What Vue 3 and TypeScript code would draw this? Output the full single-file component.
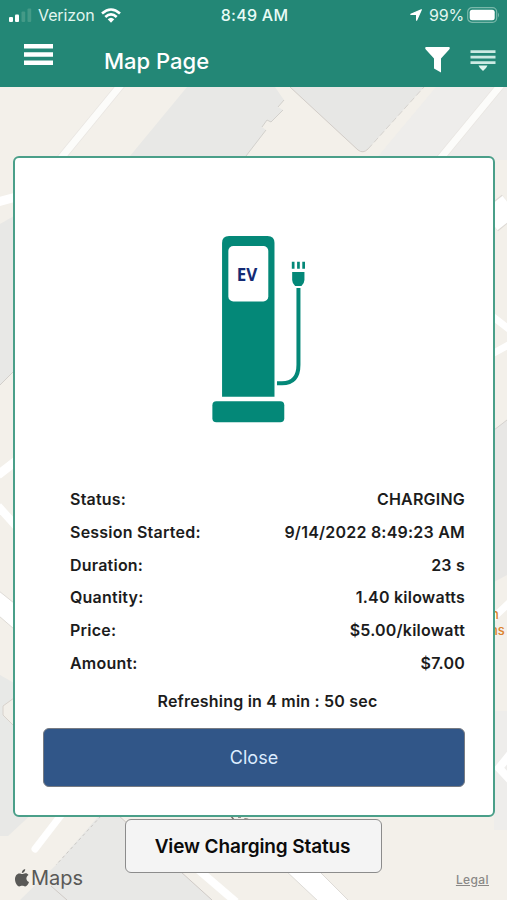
<script setup lang="ts">
interface Detail {
  label: string
  value: string
}

const details: Detail[] = [
  { label: 'Status:', value: 'CHARGING' },
  { label: 'Session Started:', value: '9/14/2022 8:49:23 AM' },
  { label: 'Duration:', value: '23 s' },
  { label: 'Quantity:', value: '1.40 kilowatts' },
  { label: 'Price:', value: '$5.00/kilowatt' },
  { label: 'Amount:', value: '$7.00' },
]
</script>

<template>
  <div class="screen">
    <svg class="map" viewBox="0 0 507 900" aria-hidden="true">
      <rect width="507" height="900" fill="#f3f0ea" />
      <!-- blocks along the top -->
      <path d="M187 87H275L284 100L278 107L283 110L271 122L267 120L262 127L266 130L246 156H130Z" fill="#e8e8e6" />
      <path d="M284 100L278 107M283 110L271 122L267 120L262 127M266 130L246 156" fill="none" stroke="#d2d0cc" />
      <path d="M290 87H424L368 149Q363 154 358 150Z" fill="#e7e7e5" />
      <path d="M290 87L358 150Q363 154 368 149" fill="none" stroke="#d2cdc8" />
      <path d="M368 149L424 87" fill="none" stroke="#d5d2ce" stroke-dasharray="6 3" />
      <path d="M436 87H507V160H375Z" fill="#eeedeb" />
      <path d="M125 80L57 163M505 80L435 165" fill="none" stroke="#e9e6e2" stroke-width="8.5" />
      <path d="M125 80L57 163M505 80L435 165" fill="none" stroke="#fcfcfa" stroke-width="7" />
      <!-- left edge -->
      <path d="M0 224L14 216V371L0 385Z" fill="#e8e8e6" />
      <path d="M0 385L14 371" stroke="#d2cfcb" />
      <path d="M-2 202L16 197M-2 475L16 461" stroke="#fff" stroke-width="9" />
      <path d="M-2 506L16 526" stroke="#fff" stroke-width="8" />
      <path d="M-1 591L14 603V629L-1 616Z" fill="#fff" stroke="#dedbd6" />
      <path d="M0 675L14 683V820L0 834Z" fill="#e8e9e7" />
      <path d="M14 698L3 706V715L14 726Z" fill="#f2efe9" stroke="#d8d2cc" />
      <!-- right edge -->
      <path d="M494 430L507 420V575L494 582Z" fill="#e8e7e5" />
      <path d="M494 430L507 420" stroke="#d4d1cd" />
      <path d="M490 221L510 205" stroke="#ddd9d4" stroke-width="26" />
      <path d="M490 221L510 205" stroke="#fff" stroke-width="24" />
      <path d="M492 316L510 330M492 354L510 344M492 619L510 602" stroke="#fff" stroke-width="7" />
      <path d="M494 711H507V830H494Z" fill="#eeedeb" />
      <path d="M512 752L499 768L512 782" fill="none" stroke="#fff" stroke-width="8" />
      <!-- blocks along the bottom -->
      <path d="M0 810H36L8 836H0Z" fill="#e8e8e6" />
      <path d="M65 810L35 849" stroke="#fff" stroke-width="7" stroke-linecap="round" />
      <path d="M104 810L55 866L20 900H66L52 887L66 900H212L112 810Z" fill="#e8e8e6" />
      <path d="M101 816L56 865" stroke="#cbc8c4" stroke-dasharray="3 3" />
      <path d="M118 815L212 900M51 886L67 900" stroke="#cfcac6" />
      <path d="M194 866L236 902" stroke="#fff" stroke-width="8" />
      <path d="M285 870H318L350 902H319Z" fill="#fff" stroke="#dedbd7" />
      <path d="M231 816L234 820M238 817H241M243 822Q244 817 249 820" fill="none" stroke="#77716b" stroke-width="1.5" />
      <text x="491" y="619" class="poi">n</text>
      <text x="490" y="635" class="poi">ns</text>
    </svg>

    <header class="header">
      <div class="status-bar">
        <div class="carrier">
          <svg width="23" height="14" viewBox="0 0 23 14">
            <rect x="0" y="9" width="4" height="5" rx="1" fill="#fff" />
            <rect x="6" y="6.5" width="4" height="7.5" rx="1" fill="#fff" />
            <rect x="12.5" y="3.5" width="3.7" height="10.5" rx="1" fill="#449a87" />
            <rect x="18.5" y="0.5" width="3.7" height="13.5" rx="1" fill="#449a87" />
          </svg>
          <span class="carrier-name">Verizon</span>
          <svg width="20" height="15" viewBox="0 0 20 15" fill="none" stroke="#fff" stroke-width="2.6">
            <path d="M1 5.5Q10-2.5 19 5.5M4.3 9Q10 3.6 15.7 9" />
            <path d="M6.7 11.3Q10 8.3 13.3 11.3L10 14.7Z" fill="#fff" stroke="none" />
          </svg>
        </div>
        <span class="clock">8:49 AM</span>
        <div class="power">
          <svg width="12" height="12" viewBox="0 0 12 12"><path d="M11.3.7L.8 5.3H6.6V11.2Z" fill="#fff" stroke="#fff" stroke-width="1.2" stroke-linejoin="round" /></svg>
          <span class="percent">99%</span>
          <svg class="battery" width="33" height="16" viewBox="0 0 33 16">
            <rect x=".7" y=".7" width="29" height="14.6" rx="4.3" fill="none" stroke="#79b8aa" stroke-width="1.2" />
            <rect x="2.7" y="2.7" width="25" height="10.6" rx="2.5" fill="#fff" />
            <path d="M31 5.5Q33 8 31 10.5Z" fill="#79b8aa" />
          </svg>
        </div>
      </div>
      <div class="nav">
        <svg class="menu" width="29" height="21" viewBox="0 0 29 21" fill="#fff">
          <path d="M0 0H29V4.5H0ZM0 8.2H29V12.7H0ZM0 16.4H29V20.9H0Z" />
        </svg>
        <h1 class="title">Map Page</h1>
        <svg class="filter" width="25" height="26" viewBox="0 0 25 26">
          <path d="M.8 0H24.2Q25.4 1.2 24.2 2.4L16 11.5V25.5L9 21.5V11.5L.8 2.4Q-.4 1.2.8 0Z" fill="#fff" />
        </svg>
        <svg class="list" width="26" height="22" viewBox="0 0 26 22">
          <path d="M.5 1.7H25.5M.5 7.2H25.5M.5 12.7H25.5" stroke="#cceae3" stroke-width="2.7" />
          <path d="M8.5 15.5H17.5L16 18L13 21L10 18Z" fill="#dff5ef" />
        </svg>
      </div>
    </header>

    <main class="card">
      <svg class="charger" width="110" height="190" viewBox="0 0 110 190">
        <path d="M12 163V9Q12 2 19 2H57.5Q64.5 2 64.5 9V163Z" fill="#048878" />
        <rect x="18.3" y="12" width="40" height="55.5" rx="5" fill="#fff" />
        <rect x="2.3" y="167.5" width="72" height="21" rx="4" fill="#048878" />
        <text x="26.6" y="46.8" class="ev">EV</text>
        <path d="M67 149.5H72Q88.5 149.5 88.5 131V54" fill="none" stroke="#048878" stroke-width="4" />
        <path d="M82.2 38H94.5V46Q94.5 49 91.5 52H85.2Q82.2 49 82.2 46Z" fill="#048878" />
        <path d="M83.2 27.7V34.8M88.5 27.7V34.8M93.7 27.7V34.8" stroke="#048878" stroke-width="2.7" />
      </svg>
      <dl class="details">
        <div v-for="item in details" :key="item.label" class="row">
          <dt>{{ item.label }}</dt>
          <dd>{{ item.value }}</dd>
        </div>
      </dl>
      <p class="refresh">Refreshing in 4 min : 50 sec</p>
      <button class="close" type="button">Close</button>
    </main>

    <footer class="footer">
      <div class="brand">
        <svg width="14" height="18" viewBox="0 0 14 18" fill="#595957">
          <path d="M7 5.1C8.2 5.1 9 4.2 10.4 4.2C11.8 4.2 12.8 4.9 13.5 5.9C10.4 7.8 10.9 11.8 14 13C13.2 15.2 11.8 17.5 10.2 17.5C9 17.5 8.6 16.8 7.2 16.8C5.8 16.8 5.3 17.5 4.2 17.5C2.2 17.5 0 13.6 0 10.3C0 6.6 2.1 4.4 4.3 4.4C5.5 4.4 6.3 5.1 7 5.1ZM6.8 4.1C6.8 1.9 8.4.3 10.2.1C10.4 2.3 8.7 4 6.8 4.1Z" />
        </svg>
        <span class="maps">Maps</span>
      </div>
      <button class="view" type="button">View Charging Status</button>
      <a class="legal">Legal</a>
    </footer>
  </div>
</template>

<style>
body {
  margin: 0;
}
</style>

<style scoped>
.screen {
  position: relative;
  display: flex;
  flex-direction: column;
  width: 507px;
  height: 900px;
  overflow: hidden;
  font-family: Inter, 'Liberation Sans', sans-serif;
}
.map {
  position: absolute;
  inset: 0;
  width: 507px;
  height: 900px;
}
.poi {
  font-size: 13px;
  font-weight: 500;
  fill: #dc822c;
}
.header {
  position: relative;
  box-sizing: border-box;
  height: 87px;
  background: #238776;
  color: #fff;
}
.status-bar {
  display: grid;
  grid-template-columns: 1fr auto 1fr;
  align-items: center;
  height: 30px;
  padding: 0 7px 0 9px;
}
.carrier,
.power {
  display: flex;
  align-items: center;
  font-size: 16px;
  color: #e2f6f0;
}
.carrier-name {
  margin: 0 6px 0 6px;
  letter-spacing: -0.1px;
}
.power {
  justify-content: flex-end;
}
.percent {
  margin: 0 3px 0 7px;
  letter-spacing: -0.2px;
}
.clock {
  font-size: 16px;
  font-weight: 500;
  letter-spacing: 0.25px;
  color: #e9fbf6;
}
.nav {
  display: flex;
  align-items: flex-start;
  padding: 14px 11px 0 24px;
}
.title {
  flex: 1;
  margin: 3px 0 0 51px;
  font-size: 22px;
  line-height: 28px;
  font-weight: 500;
  letter-spacing: 0;
}
.filter {
  margin: 3px 20px 0 0;
}
.list {
  margin-top: 6px;
}
.card {
  position: relative;
  display: flex;
  flex-direction: column;
  box-sizing: border-box;
  width: 482px;
  height: 661px;
  margin: 69px 0 0 13px;
  padding: 76px 28px 28px;
  border: 2px solid #4a9f89;
  border-radius: 6px;
  background: #fff;
}
.charger {
  margin-left: 167px;
}
.ev {
  font-family: 'Noto Sans', 'Open Sans', sans-serif;
  font-size: 17px;
  font-weight: 700;
  fill: #142a74;
}
.details {
  margin: 59.3px 0 0 27px;
  font-size: 16px;
  font-weight: 600;
  letter-spacing: 0.22px;
  color: #1c1c1c;
}
.row {
  display: flex;
  justify-content: space-between;
  line-height: 32.8px;
}
.row dd {
  margin: 0;
}
.refresh {
  margin: 9px 0 14.2px 27px;
  font-size: 16px;
  line-height: 25px;
  font-weight: 600;
  letter-spacing: 0.2px;
  text-align: center;
  color: #1c1c1c;
}
.close {
  height: 59px;
  flex: none;
  padding: 0;
  border: 1px solid #777b82;
  border-radius: 6px;
  background: #315688;
  font: 400 18px Inter, sans-serif;
  color: #dcecff;
}
.footer {
  position: relative;
  display: grid;
  grid-template-columns: 110px 257px 1fr;
  height: 81px;
  margin-top: 2px;
  padding: 0 18px 0 15px;
}
.brand {
  display: flex;
  align-items: center;
  align-self: start;
  gap: 2px;
  margin-top: 46px;
}
.maps {
  font-size: 20px;
  line-height: 26px;
  color: #595957;
}
.view {
  height: 54px;
  padding: 1px 2px 0 0;
  border: 1.5px solid #8c8c8c;
  border-radius: 6px;
  background: #f4f4f4;
  font: 600 19px Inter, sans-serif;
  letter-spacing: -0.12px;
  color: #0b0b0b;
}
.legal {
  justify-self: end;
  margin-top: 53px;
  font-size: 12px;
  font-weight: 500;
  letter-spacing: 0.4px;
  line-height: 16px;
  text-decoration: underline;
  color: #8a8886;
}
</style>
